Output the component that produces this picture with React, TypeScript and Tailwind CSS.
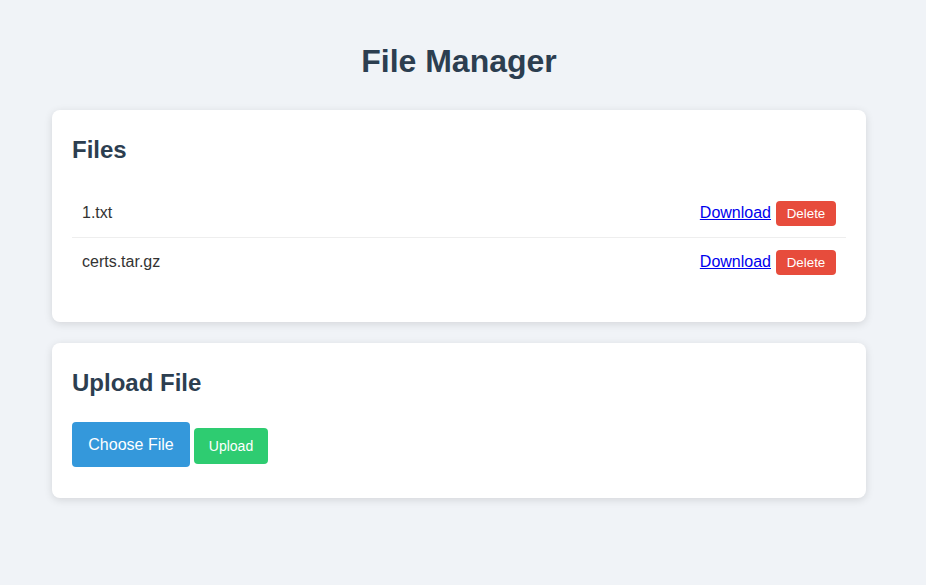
import React from "react";

const files = ["1.txt", "certs.tar.gz"];

export default function App() {
  return (
    <div
      className="min-h-screen w-full bg-[#f0f3f7]"
      style={{ fontFamily: '"Liberation Sans", Arial, sans-serif' }}
    >
      <div className="ml-[52px] w-[814px] pb-[40px]">
        <h1 className="pt-[43px] text-center text-[32px] font-bold leading-[37px] text-[#2c3e50]">
          File Manager
        </h1>

        <div className="mt-[30px] rounded-[8px] bg-white px-[20px] pt-[26px] pb-[36px] shadow-[0_2px_8px_rgba(0,0,0,0.12)]">
          <h2 className="text-[24px] font-bold leading-[28px] text-[#2c3e50]">Files</h2>
          <ul className="mt-[25px]">
            {files.map((f, i) => (
              <li
                key={f}
                className={
                  "flex items-center justify-between px-[10px] " +
                  (i < files.length - 1 ? "h-[49px] border-b border-[#eeeeee]" : "h-[48px]")
                }
              >
                <span className="text-[16px] text-[#333333]">{f}</span>
                <span className="flex items-center gap-[5px]">
                  <a href="#" className="text-[16px] text-[#0000ee] underline">
                    Download
                  </a>
                  <button className="h-[25px] w-[60px] rounded-[4px] bg-[#e74c3c] text-[13.33px] leading-[15px] text-white">
                    Delete
                  </button>
                </span>
              </li>
            ))}
          </ul>
        </div>

        <div className="mt-[21px] rounded-[8px] bg-white px-[20px] pt-[26px] pb-[31px] shadow-[0_2px_8px_rgba(0,0,0,0.12)]">
          <h2 className="text-[24px] font-bold leading-[28px] text-[#2c3e50]">Upload File</h2>
          <div className="mt-[25px] flex items-start gap-[4px]">
            <label className="flex h-[45px] w-[118px] items-center justify-center rounded-[4px] bg-[#3498db] text-[16px] text-white">
              Choose File
            </label>
            <button className="mt-[6px] h-[36px] w-[74px] rounded-[4px] bg-[#2ecc71] text-[14px] text-white">
              Upload
            </button>
          </div>
        </div>
      </div>
    </div>
  );
}
